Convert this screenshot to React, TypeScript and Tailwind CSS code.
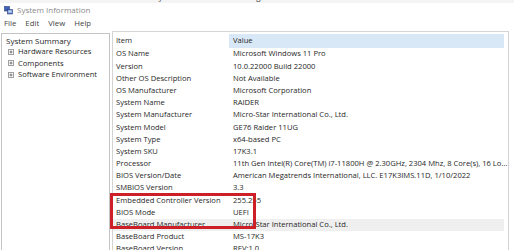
import React from "react";

const rows: [string, string][] = [
  ["OS Name", "Microsoft Windows 11 Pro"],
  ["Version", "10.0.22000 Build 22000"],
  ["Other OS Description", "Not Available"],
  ["OS Manufacturer", "Microsoft Corporation"],
  ["System Name", "RAIDER"],
  ["System Manufacturer", "Micro-Star International Co., Ltd."],
  ["System Model", "GE76 Raider 11UG"],
  ["System Type", "x64-based PC"],
  ["System SKU", "17K3.1"],
  ["Processor", "11th Gen Intel(R) Core(TM) i7-11800H @ 2.30GHz, 2304 Mhz, 8 Core(s), 16 Lo..."],
  ["BIOS Version/Date", "American Megatrends International, LLC. E17K3IMS.11D, 1/10/2022"],
  ["SMBIOS Version", "3.3"],
  ["Embedded Controller Version", "255.255"],
  ["BIOS Mode", "UEFI"],
  ["BaseBoard Manufacturer", "Micro-Star International Co., Ltd."],
  ["BaseBoard Product", "MS-17K3"],
  ["BaseBoard Version", "REV:1.0"],
];

function Plus() {
  return (
    <svg width="6" height="6" viewBox="0 0 6 6" className="shrink-0">
      <rect x="0.5" y="0.5" width="5" height="5" fill="white" stroke="#a0a0a0" strokeWidth="1" />
      <path d="M1.5 3H4.5M3 1.5V4.5" stroke="#555" strokeWidth="0.8" />
    </svg>
  );
}

function AppIcon() {
  return (
    <svg width="9" height="9" viewBox="0 0 9 9">
      <rect x="0.5" y="0.5" width="5" height="4.5" fill="#3f63b8" stroke="#2a3f7a" strokeWidth="0.6" />
      <rect x="3.5" y="3.5" width="5" height="4.5" fill="#5a7fd0" stroke="#2a3f7a" strokeWidth="0.6" />
      <rect x="4.3" y="4.3" width="3.4" height="2.4" fill="#bcd2f2" />
    </svg>
  );
}

export default function App() {
  return (
    <div
      className="relative w-[514px] h-[250px] overflow-hidden bg-white text-[#1f1f1f]"
      style={{ fontFamily: '"Open Sans", "Noto Sans", sans-serif' }}
    >
      <div className="h-[3px] overflow-hidden bg-[#f4f4f4]">
        <div className="-mt-[7px] pl-[100px] text-[8px] leading-[8px] text-[#444] whitespace-nowrap">
          Manufacturer/System Information showing BIOS Mode in the Controller
        </div>
      </div>
      <div className="h-[14px] flex items-center pl-[4px] gap-[4px]">
        <AppIcon />
        <span className="text-[8px] text-[#8a8a8a]">System Information</span>
      </div>
      <div className="h-[13px] flex items-center pl-[4px] gap-[9px] text-[7.8px] text-[#444]">
        <span>File</span>
        <span>Edit</span>
        <span>View</span>
        <span>Help</span>
      </div>
      <div className="flex mt-[1px] gap-[2px] pl-[1px] text-[7.6px]">
        <div className="w-[109px] h-[240px] mt-[2px] border border-[#c4c4c4] pt-[1px] pl-[4px] leading-[11.3px]">
          <div className="text-[8px]">System Summary</div>
          {["Hardware Resources", "Components", "Software Environment"].map((t) => (
            <div key={t} className="flex items-center gap-[4px] pl-[2px]">
              <Plus />
              <span>{t}</span>
            </div>
          ))}
        </div>
        <div className="w-[397px] border-t border-l border-r border-[#d4d4d4] pt-[2px]">
          <div className="flex h-[14px] items-center">
            <div className="w-[116px] pl-[3px]">Item</div>
            <div className="w-[275px] h-full flex items-center pl-[4px] bg-[#d9e8f7]">Value</div>
          </div>
          {rows.map(([k, v]) => (
            <div
              key={k}
              className={`flex h-[12.2px] items-center whitespace-nowrap ${
                k === "BaseBoard Manufacturer" ? "bg-[#efefef] w-[391px]" : ""
              }`}
            >
              <div className="w-[116px] pl-[3px] shrink-0">{k}</div>
              <div className="pl-[4px]">{v}</div>
            </div>
          ))}
        </div>
      </div>
      <div className="absolute left-[110px] top-[193px] w-[146px] h-[36px] border-[3px] border-[#cc1f28]" />
    </div>
  );
}
